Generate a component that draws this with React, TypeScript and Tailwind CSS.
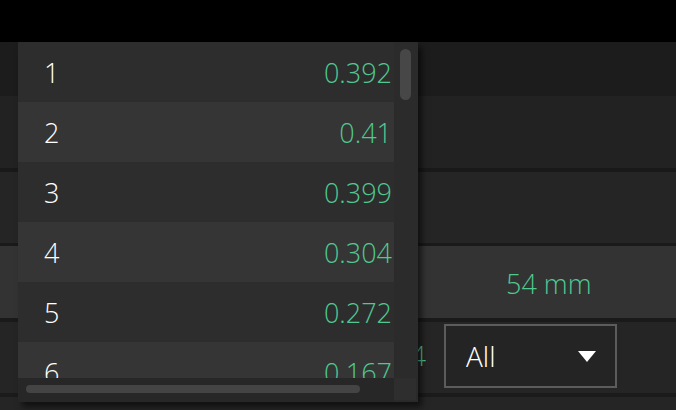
import React from 'react';

const values = ['0.392', '0.41', '0.399', '0.304', '0.272', '0.167'];

function Popup() {
  return (
    <div className="absolute left-[18px] top-[42px] w-[400px] h-[360px] bg-[#2a2a2a] shadow-[4px_5px_6px_rgba(0,0,0,0.55)] grid grid-cols-[376px_24px] grid-rows-[336px_24px]">
      <div className="overflow-hidden">
        {values.map((v, i) => (
          <div
            key={i}
            className={`h-[60px] shrink-0 flex items-center justify-between pl-[26px] pr-[2px] ${
              i % 2 === 0 ? 'bg-[#2d2d2d]' : 'bg-[#353535]'
            }`}
          >
            <span className="text-white">{i + 1}</span>
            <span className="text-[#50c890]">{v}</span>
          </div>
        ))}
      </div>
      <div className="bg-[#2b2b2b] pl-[6px] pt-[7px]">
        <div className="w-[11px] h-[51px] rounded-full bg-[#474747]" />
      </div>
      <div className="bg-[#272727] pl-[8px] pt-[7px]">
        <div className="w-[334px] h-[8px] rounded-full bg-[#444444]" />
      </div>
      <div className="pr-[2px] pb-[2px]">
        <div className="w-full h-full bg-[#2e2e2e]" />
      </div>
    </div>
  );
}

export default function App() {
  return (
    <div
      className="relative w-[676px] h-[410px] overflow-hidden bg-[#252525] text-[27px] leading-none font-light"
      style={{ fontFamily: '"Open Sans", "Noto Sans", sans-serif' }}
    >
      <div className="h-[42px] bg-black" />
      <div className="h-[54px] bg-[#1c1c1c]" />
      <div className="h-[72px] bg-[#222222]" />
      <div className="h-[4px] bg-[#191919]" />
      <div className="h-[71px] bg-[#252525]" />
      <div className="h-[3px] bg-[#1a1a1a]" />
      <div className="h-[72px] bg-[#333333] flex items-center">
        <div className="ml-[506px] text-[#50c890] mt-[2px]">54 mm</div>
      </div>
      <div className="h-[4px] bg-[#1a1a1a]" />
      <div className="h-[71px] bg-[#252525] flex items-start">
        <div className="w-[426px] h-[67px] flex items-center justify-end text-[#50c890]">0.54</div>
        <div className="ml-[18px] mt-[2px] w-[173px] h-[64px] border-2 border-[#5c5c5c] bg-[#242424] flex items-center justify-between pl-[20px] pr-[19px]">
          <span className="text-white text-[28px]">All</span>
          <svg width="18" height="11" viewBox="0 0 18 11">
            <path d="M0 0 H18 L9 11 Z" fill="#ffffff" />
          </svg>
        </div>
      </div>
      <div className="h-[4px] bg-[#1b1b1b]" />
      <div className="h-[13px] bg-[#252525]" />
      <Popup />
    </div>
  );
}
